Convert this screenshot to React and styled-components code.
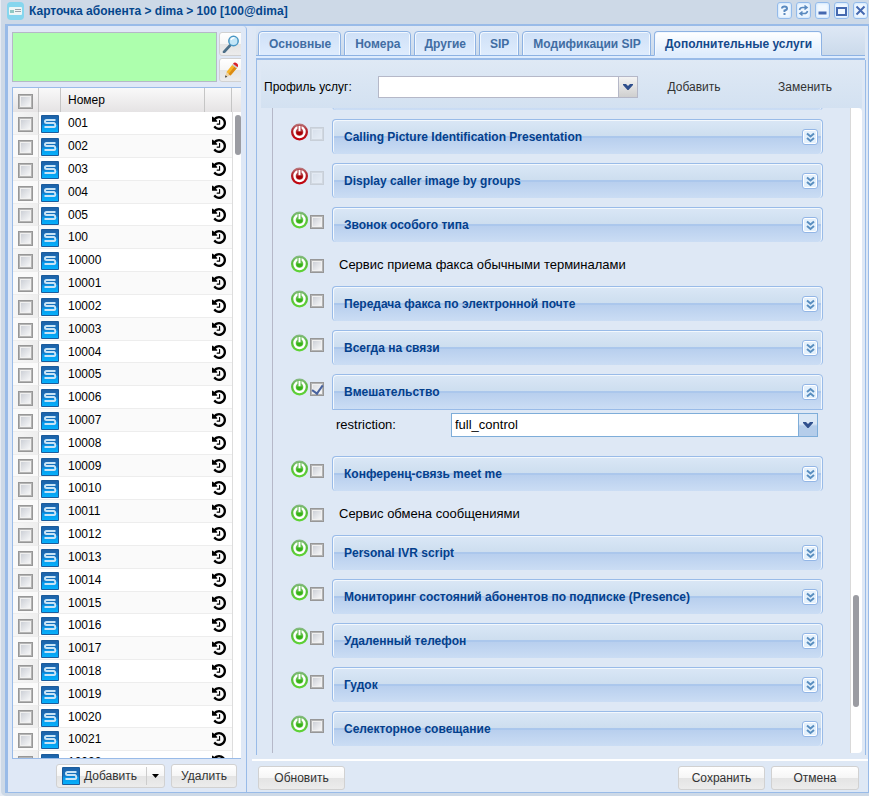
import { useLayoutEffect, useRef } from 'react'
import styled, { createGlobalStyle, css } from 'styled-components'

const phones = [
  '001', '002', '003', '004', '005', '100', '10000', '10001', '10002', '10003',
  '10004', '10005', '10006', '10007', '10008', '10009', '10010', '10011', '10012', '10013',
  '10014', '10015', '10016', '10017', '10018', '10019', '10020', '10021', '10022',
]

const tabs = ['Основные', 'Номера', 'Другие', 'SIP', 'Модификации SIP', 'Дополнительные услуги']

const services = [
  { name: '', on: false },
  { name: 'Calling Picture Identification Presentation', on: false },
  { name: 'Display caller image by groups', on: false },
  { name: 'Звонок особого типа', on: true },
  { name: 'Сервис приема факса обычными терминалами', on: true, plain: true },
  { name: 'Передача факса по электронной почте', on: true },
  { name: 'Всегда на связи', on: true },
  { name: 'Вмешательство', on: true, open: true },
  { name: 'Конференц-связь meet me', on: true },
  { name: 'Сервис обмена сообщениями', on: true, plain: true },
  { name: 'Personal IVR script', on: true },
  { name: 'Мониторинг состояний абонентов по подписке (Presence)', on: true },
  { name: 'Удаленный телефон', on: true },
  { name: 'Гудок', on: true },
  { name: 'Селекторное совещание', on: true },
]

//icons
const SIcon = () => (
  <svg width='18' height='18' viewBox='0 0 18 18'>
    <defs>
      <linearGradient id='sbg' x1='0' y1='0' x2='0' y2='1'>
        <stop offset='0' stopColor='#1f62a8' />
        <stop offset='0.5' stopColor='#1277c6' />
        <stop offset='0.6' stopColor='#0798ea' />
        <stop offset='1' stopColor='#06b0fb' />
      </linearGradient>
    </defs>
    <rect width='18' height='18' rx='1' fill='#1b5c9c' />
    <rect x='1' y='1' width='16' height='16' fill='url(#sbg)' />
    <path d='M14.500 5H5.500Q4 5 4 6.500T5.500 8H13Q14.300 8.500 14.300 10.300T13 12H3.500' fill='none' stroke='#c9e4f6' strokeWidth='2' />
  </svg>
)

const HistoryIcon = () => (
  <svg width='14' height='14' viewBox='0 128 1536 1536'>
    <path d='M1536 896q0 156-61 298t-164 245-245 164-298 61q-172 0-327-72.5t-264-204.5q-7-10-6.5-22.5t8.5-20.5l137-138q10-9 25-9 16 2 23 12 73 95 179 147t225 52q104 0 198.5-40.5t163.5-109.5 109.5-163.5 40.500-198.500-40.500-198.500-109.500-163.500-163.500-109.500-198.500-40.500q-98 0-188 35.500t-160 101.500l137 138q31 30 14 69-17 40-59 40h-448q-26 0-45-19t-19-45v-448q0-42 40-59 39-17 69 14l130 129q107-101 244.500-156.500t284.500-55.500q156 0 298 61t245 164 164 245 61 298zm-640-288v448q0 14-9 23t-23 9h-320q-14 0-23-9t-9-23v-64q0-14 9-23t23-9h224v-352q0-14 9-23t23-9h64q14 0 23 9t9 23z' />
  </svg>
)

const PowerIcon = ({ on }) => (
  <svg width='17' height='18' viewBox='0 0 17 18'>
    <defs>
      <linearGradient id={on ? 'pg' : 'pr'} x1='0' y1='0' x2='0' y2='1'>
        <stop offset='0' stopColor={on ? '#8cb98a' : '#b98084'} />
        <stop offset='0.4' stopColor={on ? '#57bb3c' : '#b3222a'} />
        <stop offset='1' stopColor={on ? '#5fd535' : '#c3000a'} />
      </linearGradient>
    </defs>
    <circle cx='8.500' cy='9' r='8.500' fill={`url(#${on ? 'pg' : 'pr'})`} />
    <circle cx='8.500' cy='9' r='5' fill={on ? '#6cc553' : '#b8454b'} stroke='#fff' strokeWidth='2.400' />
    <path d='M6.500 2.500h4V8h-4z' fill={on ? '#5fb84a' : '#b0333a'} />
    <path d='M7.500 3h2v5.500h-2z' fill='#fff' />
    <path d='M5.300 8.500h6.400q0 3.700-3.200 3.700t-3.200-3.700z' fill={on ? '#36b317' : '#a80005'} />
  </svg>
)

const CardIcon = () => (
  <svg width='17' height='18' viewBox='0 0 17 18'>
    <rect width='17' height='18' rx='4' fill='#86d6ee' />
    <rect x='2' y='5' width='13' height='8' rx='1' fill='#eef6f6' />
    <rect x='3' y='8' width='4' height='3' fill='#8fc9c4' />
    <path d='M8 7.500h6M8 9.500h6' stroke='#9aa5ad' />
  </svg>
)

const SearchIcon = () => (
  <svg width='18' height='18' viewBox='0 0 18 18'>
    <path d='M8 10.500L2 17' stroke='#4d6f88' strokeWidth='2.600' strokeLinecap='round' />
    <circle cx='11.500' cy='6' r='4.700' fill='#c3e6f7' stroke='#4a97c4' strokeWidth='1.500' />
    <path d='M9 5q1-2.500 3.500-2.200' fill='none' stroke='#fff' strokeWidth='1.500' />
  </svg>
)

const PencilIcon = () => (
  <svg width='18' height='18' viewBox='0 0 18 18'>
    <path d='M3 16.500l1.500-5.500 3.500 3.500z' fill='#ecd2a5' />
    <path d='M3 16.500l0.600-2.300 1.700 1.700z' fill='#333' />
    <path d='M4.500 11L10.500 3.500l4.500 3.500L8.500 14.500z' fill='#f7b529' />
    <path d='M6.500 13L12.800 5.300l2.200 1.700L8.500 14.500z' fill='#dc8a12' />
    <path d='M10 4l1-1.200 4.600 3.500-1 1.300z' fill='#c9ced6' />
    <path d='M11 2.800Q12.500.8 14.700 2.200t.900 4.100z' fill='#d8222b' />
  </svg>
)

const Chevrons = ({ up }) => (
  <svg width='9' height='11' viewBox='0 0 9 11'>
    <path
      d={up ? 'M1 5l3.500-3L8 5M1 9.500l3.500-3L8 9.500' : 'M1 1.500l3.500 3L8 1.500M1 6l3.500 3L8 6'}
      fill='none' stroke='#5a8fc0' strokeWidth='2'
    />
  </svg>
)

const ArrowIcon = () => (
  <svg width='10' height='6' viewBox='0 0 10 6'>
    <path d='M0 0h3l2 2 2-2h3v1L5.500 6h-1L0 1z' fill='#2f4f8c' />
  </svg>
)

const toolIcons = [
  ['Справка', <path key='h' d='M5 5.500Q5 3.500 7.500 3.500T10 5.500Q10 7 7.500 7.500V9M7.500 10v2' stroke='#5a8ac0' />],
  ['Обновить', <path key='r' d='M3.500 7Q4 4.500 6.500 4.500H10M8.500 2.500l2.500 2-2.500 2M11.500 8Q11 10.500 8.500 10.500H5M6.500 8.500L4 10.500l2.500 2' stroke='#5a8ac0' strokeWidth='1.600' />],
  ['Свернуть', <path key='m' d='M3.500 10h8' strokeWidth='3' />],
  ['Развернуть', <path key='x' d='M2.500 5h10M3 4v8h9V4' />],
  ['Закрыть', <path key='c' d='M3.500 3.500l8 8M11.500 3.500l-8 8' />],
]

const Combo = ({ id, value, tall }) => (
  <ComboWrap $tall={tall}>
    <select id={id} defaultValue={value}>
      <option value={value}>{value}</option>
    </select>
    <span><ArrowIcon /></span>
  </ComboWrap>
)

const Service = ({ service, index }) => {
  const { name, on, plain, open } = service
  const id = `service-${index}`

  return (
    <ServiceRow $plain={plain}>
      <PowerIcon on={on} />
      <CheckBox id={id} aria-label={name} $size={14} disabled={!on} defaultChecked={open} />
      {plain ? (
        <PlainName htmlFor={id}>{name}</PlainName>
      ) : (
        <ServicePanel>
          <ServiceHead $open={open}>
            <h3>{name}</h3>
            <Toggle type='button' aria-label={name} aria-expanded={!!open}>
              <Chevrons up={open} />
            </Toggle>
          </ServiceHead>
          {open && (
            <ServiceBody>
              <label htmlFor='restriction'>restriction:</label>
              <Combo id='restriction' value='full_control' tall />
            </ServiceBody>
          )}
        </ServicePanel>
      )}
    </ServiceRow>
  )
}

const App = () => {
  const scroller = useRef(null)

  useLayoutEffect(() => {
    scroller.current.scrollTop = 33
  }, [])

  return (
    <>
      <GlobalStyle />
      <Window>
        <TitleBar>
          <CardIcon />
          <h1>Карточка абонента &gt; dima &gt; 100 [100@dima]</h1>
          {toolIcons.map(([label, shape]) => (
            <Tool key={label} type='button' aria-label={label}>
              <svg width='15' height='15' viewBox='0 0 15 15' fill='none' stroke='#4569b0' strokeWidth='2'>{shape}</svg>
            </Tool>
          ))}
        </TitleBar>

        <Body>
          {/* numbers list */}
          <SidePanel>
            <SearchRow>
              <textarea aria-label='Поиск' />
              <div>
                <IconButton type='button' aria-label='Найти'><SearchIcon /></IconButton>
                <IconButton type='button' aria-label='Изменить'><PencilIcon /></IconButton>
              </div>
            </SearchRow>
            <Grid>
              <GridTable>
                <thead>
                  <tr>
                    <th className='check'><CheckBox aria-label='Выбрать все' $size={15} /></th>
                    <th className='icon' />
                    <th>Номер</th>
                    <th className='history' />
                    <th className='rest' />
                  </tr>
                </thead>
                <tbody>
                  {phones.map((phone) => (
                    <tr key={phone}>
                      <td className='check'><CheckBox aria-label={phone} $size={15} /></td>
                      <td className='icon'><SIcon /></td>
                      <td className='number'>{phone}</td>
                      <td className='history'><HistoryIcon /></td>
                      <td className='rest' />
                    </tr>
                  ))}
                </tbody>
              </GridTable>
              <GridThumb />
            </Grid>
            <SideFooter>
              <SplitButton>
                <button type='button'><SIcon />Добавить</button>
                <button type='button' aria-label='Меню'>
                  <svg width='7' height='4' viewBox='0 0 7 4'><path d='M0 0h7L3.500 4z' /></svg>
                </button>
              </SplitButton>
              <Button type='button' $width={66}>Удалить</Button>
            </SideFooter>
          </SidePanel>

          {/* services */}
          <Main>
            <TabStrip>
              {tabs.map((tab) => (
                <Tab key={tab} type='button' $active={tab === 'Дополнительные услуги'}>{tab}</Tab>
              ))}
            </TabStrip>
            <TabLine />
            <TabBody>
              <Toolbar>
                <label htmlFor='profile'>Профиль услуг:</label>
                <Combo id='profile' value='' />
                <TextButton type='button'>Добавить</TextButton>
                <TextButton type='button'>Заменить</TextButton>
              </Toolbar>
              <ScrollArea>
                <Services ref={scroller}>
                  <div>
                    {services.map((service, index) => (
                      <Service key={index} service={service} index={index} />
                    ))}
                  </div>
                </Services>
                <ScrollTrack><span /></ScrollTrack>
              </ScrollArea>
            </TabBody>
            <MainFooter>
              <Button type='button' $width={87}>Обновить</Button>
              <i />
              <Button type='button' $width={87}>Сохранить</Button>
              <Button type='button' $width={88}>Отмена</Button>
            </MainFooter>
          </Main>
        </Body>
      </Window>
    </>
  )
}

const GlobalStyle = createGlobalStyle`
  * {
    box-sizing: border-box;
  }
  body {
    margin: 0;
    background: #e6ebf3;
    font: 12px/16px "Liberation Sans", Arial, sans-serif;
    color: #000;
  }
  button, select, textarea {
    font: inherit;
    margin: 0;
    padding: 0;
  }
  svg {
    display: block;
    flex: none;
  }
`

const buttonFace = css`
  border: 1px solid #d1d1d1;
  border-radius: 3px;
  background: linear-gradient(#fff, #f6f6f6 48%, #e4e4e4 52%, #ececec);
`

const Window = styled.div`
  height: 100vh;
  min-height: 300px;
  margin-left: 1px;
  padding: 0 0 3px 4px;
  display: flex;
  flex-direction: column;
  background: #cdd9e7;
  border-bottom-left-radius: 5px;
`

const TitleBar = styled.header`
  flex: none;
  height: 24px;
  padding: 2px 1px 0 2px;
  display: flex;
  align-items: flex-start;
  gap: 4px;
  h1 {
    flex: 1;
    margin: 0;
    padding: 1px 0 0 1px;
    font-size: 12px;
    line-height: 16px;
    color: #04468c;
  }
`

const Tool = styled.button`
  width: 15px;
  height: 17px;
  border: 1px solid #93baea;
  border-radius: 3px;
  background: #f1f8ff;
  box-shadow: inset 0 0 2px 1px #d3e8fd;
  display: flex;
  align-items: center;
  justify-content: center;
`

const Body = styled.div`
  flex: 1;
  min-height: 0;
  display: flex;
  border: solid #99bbe8;
  border-width: 2px 1px 1px 3px;
  background: #dfe8f6;
`

const SidePanel = styled.aside`
  flex: none;
  width: 239px;
  padding: 6px 5px 0 4px;
  display: flex;
  flex-direction: column;
  border-right: 1px solid #99bbe8;
  border-top-right-radius: 4px;
`

const SearchRow = styled.div`
  display: flex;
  gap: 2px;
  height: 50px;
  overflow: hidden;
  textarea {
    width: 205px;
    flex: none;
    resize: none;
    border: 1px solid #b5b8c8;
    background: #adffad;
  }
  div {
    display: flex;
    flex-direction: column;
    gap: 2px;
  }
`

const IconButton = styled.button`
  ${buttonFace}
  width: 26px;
  height: 24px;
  padding-left: 2px;
`

const Grid = styled.div`
  flex: 1;
  min-height: 0;
  margin-top: 5px;
  position: relative;
  overflow: hidden;
  border: solid #99bbe8;
  border-width: 1px 0 1px 1px;
  background: #fff;
`

const GridTable = styled.table`
  width: 100%;
  table-layout: fixed;
  border-collapse: separate;
  border-spacing: 0;
  th, td {
    padding: 0;
    height: 23px;
    text-align: left;
    font-weight: normal;
  }
  th {
    height: 24px;
    padding-left: 7px;
    border-right: 1px solid #c5c5c5;
    background: linear-gradient(#f9f9f9, #e5e3e4);
  }
  th.rest {
    border-right: none;
  }
  td {
    border-bottom: 1px solid #ededed;
  }
  tr:nth-child(11n) td, tr:nth-child(11n + 5) td {
    height: 22px;
  }
  tr:nth-child(even) td {
    background: #fafafa;
  }
  .check {
    width: 26px;
    padding: 2px 0 0 5px;
  }
  td.check {
    border-right: 1px solid #d5d5d5;
    background: linear-gradient(90deg, #f6f6f6, #eee);
  }
  .icon {
    width: 22px;
    padding: 2px 0 0 2px;
  }
  .number {
    padding-left: 7px;
  }
  .history {
    width: 27px;
    padding-left: 7px;
  }
  .rest {
    width: 9px;
  }
  td.rest {
    border-left: 1px solid #ddd;
    border-bottom: none;
    background: #fff !important;
  }
`

const GridThumb = styled.span`
  position: absolute;
  top: 27px;
  right: 0;
  width: 6px;
  height: 40px;
  border-radius: 3px;
  background: #9b9ca2;
`

const CheckBox = styled.input.attrs({ type: 'checkbox' })`
  appearance: none;
  display: block;
  flex: none;
  width: ${({ $size }) => $size}px;
  height: ${({ $size }) => $size}px;
  margin: 0;
  border: 1px solid #979797;
  background: linear-gradient(135deg, #c3c7cf, #fff);
  box-shadow: inset 0 0 0 1px #b4b4b4, inset 0 0 0 2px #f0f0f0;
  &:disabled {
    opacity: 0.3;
  }
  &:checked {
    background: linear-gradient(135deg, #d5d8dd, #fff);
    display: flex;
    align-items: flex-start;
    justify-content: center;
  }
  &:checked::after {
    content: '';
    width: 5px;
    height: 9px;
    border: solid #47629f;
    border-width: 0 2px 2px 0;
    transform: rotate(35deg);
  }
`

const Button = styled.button`
  ${buttonFace}
  width: ${({ $width }) => $width}px;
  height: 24px;
  color: #333;
`

const SideFooter = styled.div`
  flex: none;
  height: 33px;
  padding: 5px 4px 0;
  display: flex;
  justify-content: flex-end;
  gap: 6px;
`

const SplitButton = styled.div`
  ${buttonFace}
  width: 109px;
  height: 24px;
  display: flex;
  align-items: center;
  button {
    border: none;
    background: none;
    color: #333;
  }
  button:first-child {
    flex: 1;
    padding-left: 5px;
    display: flex;
    align-items: center;
    gap: 4px;
  }
  button:last-child {
    width: 18px;
    height: 18px;
    padding-left: 5px;
    border-left: 1px solid #ccc;
  }
`

const Main = styled.main`
  flex: 1;
  min-width: 0;
  margin-left: 5px;
  display: flex;
  flex-direction: column;
  background: #dee8f5;
`

const TabStrip = styled.nav`
  flex: none;
  height: 30px;
  margin: 0 3px 0 4px;
  padding: 5px 2px 0;
  display: flex;
  gap: 3px;
  border-bottom: 1px solid #8db2e3;
  background: linear-gradient(#dee8f5, #cbdaeb);
`

const Tab = styled.button`
  height: 25px;
  padding: 0 9px 0 10px;
  border: 1px solid #8db2e3;
  border-bottom-color: ${({ $active }) => ($active ? '#deecfd' : '#8db2e3')};
  border-radius: 4px 4px 0 0;
  background: ${({ $active }) => ($active ? 'linear-gradient(#fff, #deecfd)' : 'linear-gradient(#cfe0f7, #deecfd)')};
  box-shadow: inset 1px 1px 0 #f2f8ff, inset -1px 0 0 #f2f8ff;
  font-weight: bold;
  color: ${({ $active }) => ($active ? '#15498b' : '#416da3')};
`

const TabLine = styled.div`
  flex: none;
  height: 4px;
  margin: 0 3px 0 4px;
  border-bottom: 2px solid #99bbe8;
  background: #deecfd;
`

const TabBody = styled.section`
  flex: 1;
  min-height: 0;
  margin: 0 2px 4px 4px;
  padding: 0 3px 2px 4px;
  display: flex;
  flex-direction: column;
  border: solid #99bbe8;
  border-width: 0 1px;
`

const Toolbar = styled.div`
  flex: none;
  height: 48px;
  padding: 6px 28px 0 3px;
  display: flex;
  align-items: center;
  background: linear-gradient(#dfe9f5, #d3e1f1);
  label {
    width: 114px;
  }
`

const ComboWrap = styled.div`
  flex: ${({ $tall }) => ($tall ? '1' : '0 0 260px')};
  height: ${({ $tall }) => ($tall ? '24px' : '22px')};
  display: grid;
  border: 1px solid ${({ $tall }) => ($tall ? '#7eadd9' : '#b5b8c8')};
  background: #fff;
  select, span {
    grid-area: 1 / 1;
  }
  select {
    appearance: none;
    width: 100%;
    padding-left: 3px;
    border: none;
    outline: none;
    background: none;
    color: #000;
    font-size: 13px;
  }
  span {
    justify-self: end;
    width: 19px;
    display: flex;
    align-items: center;
    justify-content: center;
    border-left: 1px solid ${({ $tall }) => ($tall ? '#7eadd9' : '#b5b8c8')};
    background: ${({ $tall }) => ($tall ? 'linear-gradient(#dbe8f6 45%, #b5cdea 55%)' : 'linear-gradient(#f4f4f4, #cfcfcf)')};
    pointer-events: none;
  }
`

const TextButton = styled.button`
  width: 56px;
  margin-left: 28px;
  border: none;
  background: none;
  color: #333;
  & + & {
    margin-left: 55px;
  }
`

const ScrollArea = styled.div`
  flex: 1;
  min-height: 0;
  display: flex;
`

const Services = styled.div`
  flex: 1;
  min-width: 0;
  overflow-y: auto;
  scrollbar-width: none;
  & > div {
    margin-left: 11px;
    padding: 0 27px 0 18px;
    border-left: 1px solid #b5b8c8;
  }
`

const ScrollTrack = styled.div`
  width: 12px;
  padding: 487px 3px 0 2px;
  overflow: hidden;
  border-left: 1px solid #d9d9d9;
  border-radius: 0 4px 4px 0;
  background: #fff;
  span {
    display: block;
    height: 112px;
    border-radius: 3px;
    background: #9b9ca2;
  }
`

const ServiceRow = styled.div`
  min-height: ${({ $plain }) => ($plain ? 35 : 44)}px;
  display: flex;
  align-items: flex-start;
  & > svg {
    margin-top: 4px;
  }
  & > input {
    margin: 8px 8px 0 2px;
  }
`

const PlainName = styled.label`
  padding: 6px 0 0 7px;
  font-size: 13px;
`

const ServicePanel = styled.div`
  flex: 1;
  min-width: 0;
`

const ServiceHead = styled.div`
  height: ${({ $open }) => ($open ? 36 : 35)}px;
  padding: 0 4px 0 11px;
  display: flex;
  align-items: center;
  justify-content: space-between;
  border: solid #99bbe8;
  border-width: ${({ $open }) => ($open ? '1px' : '1px 1px 0')};
  border-radius: ${({ $open }) => ($open ? '4px 4px 0 0' : '4px')};
  background: linear-gradient(#dae7f6, #cddeef 16px, #abc7ec 16px, #abc7ec 18px, #b8cfee 18px, #cbddf4);
  box-shadow: inset 1px 1px 0 #f3f8fd, inset -1px 0 0 #f3f8fd;
  h3 {
    margin: 0;
    font-size: 12px;
    line-height: 16px;
    color: #04408c;
  }
`

const Toggle = styled.button`
  width: 16px;
  height: 16px;
  display: flex;
  align-items: center;
  justify-content: center;
  border: 1px solid #93b6e6;
  border-radius: 3px;
  background: #e3f0fc;
  box-shadow: inset 0 0 0 1px #fff;
`

const ServiceBody = styled.div`
  padding: 3px 5px 19px 4px;
  display: flex;
  align-items: center;
  label {
    width: 115px;
    font-size: 13px;
  }
`

const MainFooter = styled.footer`
  flex: none;
  height: 33px;
  padding: 5px 9px 0 6px;
  display: flex;
  gap: 6px;
  border-top: 2px solid #fff;
  i {
    flex: 1;
  }
`

export default App
